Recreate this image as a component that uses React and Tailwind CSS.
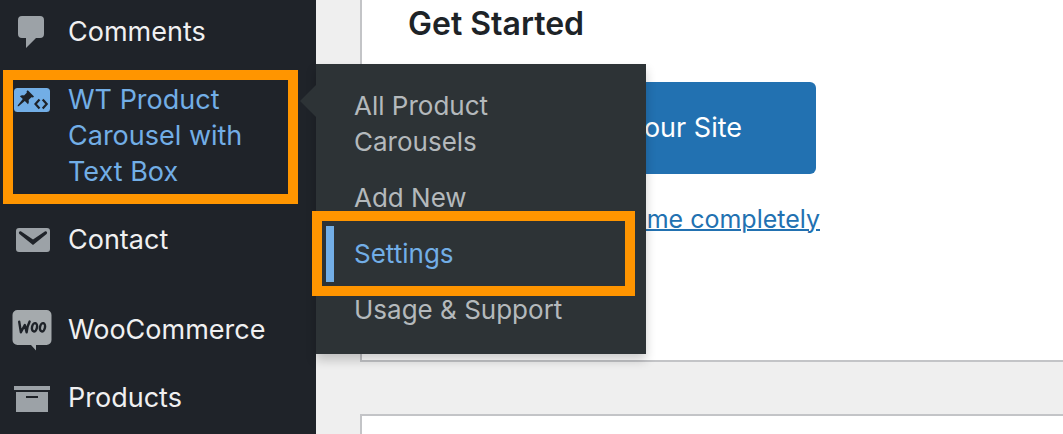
const iconClass = "h-9 w-10 shrink-0 overflow-visible";

function CommentIcon() {
  return (
    <svg viewBox="0 0 40 36" className={iconClass} fill="#9ca2a7" aria-hidden="true">
      <path d="M10 2h18a4 4 0 0 1 4 4v14a4 4 0 0 1-4 4h-4L14 34V24h-4a4 4 0 0 1-4-4V6a4 4 0 0 1 4-4z" />
    </svg>
  );
}

function PinCodeIcon() {
  return (
    <svg viewBox="0 0 40 36" className={iconClass} aria-hidden="true">
      <rect x="2" y="6" width="36" height="24" rx="3.5" fill="#72aee6" />
      <path
        d="M15.8 8.2 22 14.5l-1 1-1.600-.2-2.800 2.800c.5 1.700.3 3-.6 4.100l-3.200-3.100-6.200 5.200-.9-.1.100-.9 5-6.200-2.900-2.900c1-.9 2.400-1.200 4.100-.7l2.800-2.800-.2-1.400z"
        fill="#1f2329"
      />
      <path d="M27.500 17.500 23.500 22l4 4.500M30.700 17.500l4 4.500-4 4.500" fill="none" stroke="#1f2329" strokeWidth="2.200" />
    </svg>
  );
}

function MailIcon() {
  return (
    <svg viewBox="0 0 40 36" className={iconClass} aria-hidden="true">
      <rect x="4" y="6" width="34" height="24" rx="3" fill="#9ca2a7" />
      <path
        d="M9.200 9.400 21 17.600l11.800-8.200c1.600-1 3.200 1.100 1.800 2.500L21 23 7.400 11.900C6 10.500 7.600 8.400 9.200 9.400z"
        fill="#1f2329"
      />
    </svg>
  );
}

function WooIcon() {
  return (
    <svg viewBox="0 0 40 36" className={iconClass} aria-hidden="true">
      <path
        d="M5.500-2h29a5 5 0 0 1 5 5v25a5 5 0 0 1-5 5H24v5.500L19 33H5.500a5 5 0 0 1-5-5V3a5 5 0 0 1 5-5z"
        fill="#a5aaad"
      />
      <g fill="none" stroke="#1f2329" strokeWidth="2.400" strokeLinecap="round" strokeLinejoin="round">
        <path d="M7.200 9.800 8.900 20.300 12.800 13 14.600 20.300Q15.200 14 17.600 9.600" />
        <ellipse cx="22.500" cy="15.300" rx="2.500" ry="4.200" transform="rotate(12 22.500 15.300)" />
        <ellipse cx="30.500" cy="15.300" rx="2.500" ry="4.200" transform="rotate(12 30.500 15.300)" />
      </g>
    </svg>
  );
}

function ArchiveIcon() {
  return (
    <svg viewBox="0 0 40 36" className={iconClass} fill="#9ca2a7" aria-hidden="true">
      <path d="M2 6h36v4H2z" />
      <path d="M4 12h32v20H4zM14 16v2h12v-2z" fillRule="evenodd" />
    </svg>
  );
}

function MenuLink({ icon, children, active = false }) {
  return (
    <a
      href="#"
      className={`flex gap-4 py-4 pr-8 pl-3 text-[27px] leading-9 ${active ? "text-[#72aee6]" : "text-[#f0f0f1]"}`}
    >
      {icon}
      <span>{children}</span>
    </a>
  );
}

const submenu = [
  { label: "All Product Carousels" },
  { label: "Add New" },
  { label: "Settings", active: true },
  { label: "Usage & Support" },
];

function Flyout() {
  return (
    <div className="absolute -top-0.5 left-full z-10 w-[330px] bg-[#2d3336] pt-3.5 pb-4 shadow-[0_6px_10px_rgba(0,0,0,0.2)]">
      <svg viewBox="0 0 16 32" className="absolute top-[21px] right-full h-8 w-4" aria-hidden="true">
        <path d="M16 0v32L0 16z" fill="#2d3336" />
      </svg>
      <ul>
        {submenu.map(({ label, active }) => (
          <li key={label} className="relative pl-2.5">
            <a
              href="#"
              className={`block border-l-8 py-2.5 pr-20 pl-5 text-[26px] leading-9 ${
                active ? "border-[#72aee6] text-[#72aee6]" : "border-transparent text-[#b4b9bc]"
              }`}
            >
              {label}
            </a>
            {active && (
              <div className="pointer-events-none absolute -top-[15px] right-[11px] -bottom-3.5 -left-1 z-10 border-10 border-[#ff9500]" />
            )}
          </li>
        ))}
      </ul>
    </div>
  );
}

export default function App() {
  return (
    <div className="flex h-screen overflow-hidden bg-[#efefef] font-['Inter','Liberation_Sans',sans-serif]">
      <nav className="relative z-10 w-[316px] shrink-0 bg-[#1f2329]">
        <ul className="-mt-0.5">
          <li>
            <MenuLink icon={<CommentIcon />}>Comments</MenuLink>
          </li>
          <li className="relative">
            <MenuLink icon={<PinCodeIcon />} active>
              WT Product Carousel with Text Box
            </MenuLink>
            <div className="pointer-events-none absolute top-1 right-[18px] bottom-0.5 left-[3px] border-10 border-[#ff9500]" />
            <Flyout />
          </li>
          <li>
            <MenuLink icon={<MailIcon />}>Contact</MenuLink>
          </li>
          <li className="mt-[22px]">
            <MenuLink icon={<WooIcon />}>WooCommerce</MenuLink>
          </li>
          <li>
            <MenuLink icon={<ArchiveIcon />}>Products</MenuLink>
          </li>
        </ul>
      </nav>
      <main className="flex min-w-0 flex-1 flex-col gap-[52px] pl-11">
        <section className="shrink-0 border-b-2 border-l-2 border-[#c3c4c7] bg-white pt-1 pb-[122px] pl-[46px]">
          <h3 className="text-[32px] leading-10 font-semibold text-[#1d2327]">Get Started</h3>
          <div className="mt-[38px] flex w-[412px] flex-col">
            <button
              type="button"
              className="mr-1 rounded-md bg-[#2271b1] pr-[74px] text-right text-[27px] leading-[92px] whitespace-nowrap text-white"
            >
              Customize Your Site
            </button>
            <p className="mt-[26px] text-right text-[25px] leading-[38px] whitespace-nowrap text-[#3c434a]">
              or,{" "}
              <a href="#" className="text-[#2271b1] underline decoration-2">
                change your theme completely
              </a>
            </p>
          </div>
        </section>
        <section className="flex-1 border-t-2 border-l-2 border-[#c3c4c7] bg-white" />
      </main>
    </div>
  );
}
